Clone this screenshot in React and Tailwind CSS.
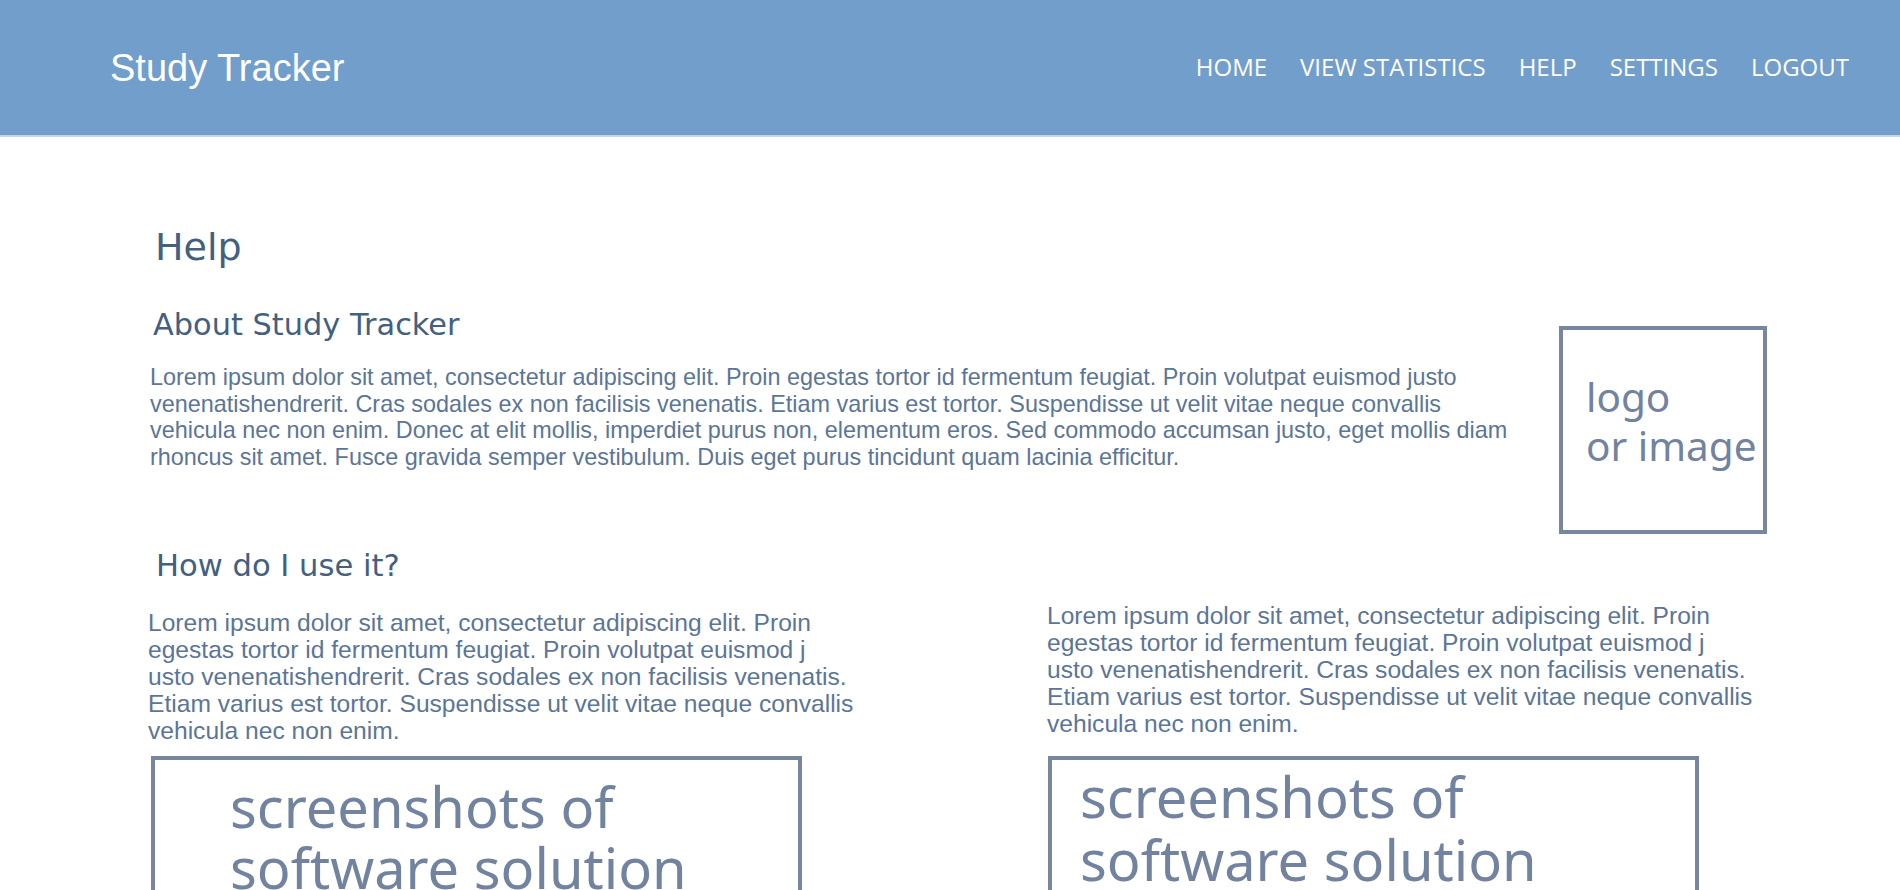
import React from 'react';

const navItems = ['HOME', 'VIEW STATISTICS', 'HELP', 'SETTINGS', 'LOGOUT'];

function Placeholder({ lines, className, textClass }) {
  return (
    <div className={`border-[4px] border-[#7887a0] ${className}`}>
      <div className={textClass}>
        {lines.map((l) => (
          <div key={l}>{l}</div>
        ))}
      </div>
    </div>
  );
}

export default function App() {
  const sans = "text-[#5b7598] [font-family:'Liberation_Sans',Arial,sans-serif]";
  const heading = "text-[#43607f] [font-family:'DejaVu_Sans',Verdana,sans-serif] leading-none";
  const boxFont = "text-[#7283a0] [font-family:'Noto_Sans',sans-serif]";

  return (
    <div className="h-[890px] w-full overflow-hidden bg-white">
      <header className="h-[137px] bg-[#729ecb] border-b-2 border-[#c4d6ea] flex items-center justify-between pl-[110px] pr-[51px]">
        <div className="text-white text-[38px] [font-family:'Liberation_Sans',Arial,sans-serif] mt-[2px]">
          Study Tracker
        </div>
        <nav className="flex items-center gap-[33px] -mt-[2px]">
          {navItems.map((item) => (
            <a key={item} href="#" className="text-white text-[24px] [font-family:'Open_Sans',sans-serif]">
              {item}
            </a>
          ))}
        </nav>
      </header>

      <main className="pt-[91px]">
        <h1 className={`${heading} text-[38px] pl-[155px]`}>Help</h1>

        <section className="flex items-start justify-between pr-[133px]">
          <div className="pl-[153px]">
            <h2 className={`${heading} text-[30.4px] mt-[44px]`}>About Study Tracker</h2>
            <p className={`${sans} text-[23.4px] leading-[26.4px] mt-[24px] -ml-[3px]`}>
              Lorem ipsum dolor sit amet, consectetur adipiscing elit. Proin egestas tortor id fermentum feugiat. Proin volutpat euismod justo
              <br />
              venenatishendrerit. Cras sodales ex non facilisis venenatis. Etiam varius est tortor. Suspendisse ut velit vitae neque convallis
              <br />
              vehicula nec non enim. Donec at elit mollis, imperdiet purus non, elementum eros. Sed commodo accumsan justo, eget mollis diam
              <br />
              rhoncus sit amet. Fusce gravida semper vestibulum. Duis eget purus tincidunt quam lacinia efficitur.
            </p>
          </div>
          <Placeholder
            lines={['logo', 'or image']}
            className="w-[208px] h-[208px] mt-[60px] flex items-center"
            textClass={`${boxFont} text-[40.5px] leading-[49px] pl-[23px] -mt-[19px]`}
          />
        </section>

        <h2 className={`${heading} text-[30.6px] mt-[17px] pl-[156px]`}>How do I use it?</h2>

        <section className="grid grid-cols-2 mt-[20px]">
          <div className="pl-[148px]">
            <p className={`${sans} text-[24.6px] leading-[27px] mt-[7px]`}>
              Lorem ipsum dolor sit amet, consectetur adipiscing elit. Proin
              <br />
              egestas tortor id fermentum feugiat. Proin volutpat euismod j
              <br />
              usto venenatishendrerit. Cras sodales ex non facilisis venenatis.
              <br />
              Etiam varius est tortor. Suspendisse ut velit vitae neque convallis
              <br />
              vehicula nec non enim.
            </p>
            <Placeholder
              lines={['screenshots of', 'software solution']}
              className="w-[651px] h-[200px] mt-[12px] ml-[3px]"
              textClass={`${boxFont} text-[56px] leading-[61px] pl-[75px] pt-[16px]`}
            />
          </div>
          <div className="pl-[97px]">
            <p className={`${sans} text-[24.6px] leading-[27px]`}>
              Lorem ipsum dolor sit amet, consectetur adipiscing elit. Proin
              <br />
              egestas tortor id fermentum feugiat. Proin volutpat euismod j
              <br />
              usto venenatishendrerit. Cras sodales ex non facilisis venenatis.
              <br />
              Etiam varius est tortor. Suspendisse ut velit vitae neque convallis
              <br />
              vehicula nec non enim.
            </p>
            <Placeholder
              lines={['screenshots of', 'software solution']}
              className="w-[651px] h-[200px] mt-[19px] ml-[1px]"
              textClass={`${boxFont} text-[56px] leading-[63px] pl-[28px] pt-[5px]`}
            />
          </div>
        </section>
      </main>
    </div>
  );
}
